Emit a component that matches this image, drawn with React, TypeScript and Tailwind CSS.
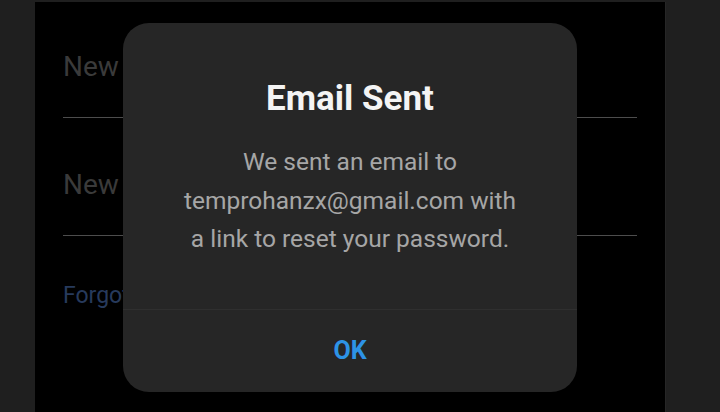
const font = { fontFamily: 'Roboto, "Noto Sans", sans-serif' };

function UnderlineField({ label }: { label: string }) {
  return (
    <div>
      <div className="text-[28px] leading-[32px] text-[#3a3a3a]">{label}</div>
      <div className="mt-[34px] h-px bg-[#4d4d4d]" />
    </div>
  );
}

function EmailSentDialog({ email }: { email: string }) {
  return (
    <div
      role="dialog"
      aria-modal="true"
      className="absolute left-[123px] top-[23px] flex h-[369px] w-[454px] flex-col rounded-[26px] bg-[#262626]"
    >
      <div className="pt-[56px] text-center text-[35px] font-bold leading-[40px] text-[#f4f4f4]">
        Email Sent
      </div>
      <p className="mt-[24px] text-center text-[24.5px] leading-[38.5px] text-[#a6a6a6]">
        We sent an email to
        <br />
        {email} with
        <br />
        a link to reset your password.
      </p>
      <div className="mt-auto h-px bg-[#2f2f2f]" />
      <button className="flex h-[82px] items-center justify-center text-[25px] font-bold text-[#2d93e6]">
        OK
      </button>
    </div>
  );
}

export default function App() {
  return (
    <div
      style={font}
      className="relative flex h-[412px] w-[720px] overflow-hidden bg-[#1f1f1f] pt-[2px]"
    >
      <div className="w-[35px] shrink-0" />
      <div className="flex w-[630px] shrink-0 flex-col bg-black px-[28px] pt-[49px]">
        <UnderlineField label="New password" />
        <div className="mt-[51px]">
          <UnderlineField label="New password" />
        </div>
        <div className="mt-[48px] text-[23px] leading-[24px] text-[#273a5c]">
          Forgot password?
        </div>
      </div>
      <div className="w-px bg-[#262626]" />

      <EmailSentDialog email="temprohanzx@gmail.com" />
    </div>
  );
}
